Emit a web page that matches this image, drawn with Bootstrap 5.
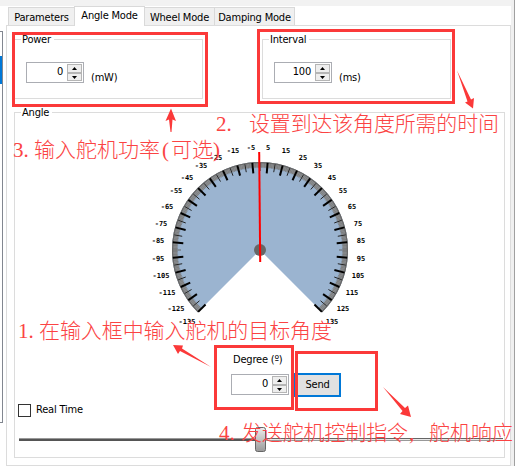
<!DOCTYPE html>
<html lang="zh">
<head>
<meta charset="utf-8">
<meta name="viewport" content="width=device-width, initial-scale=1">
<title>Servo control</title>
<link href="https://cdn.jsdelivr.net/npm/bootstrap@5.3.0/dist/css/bootstrap.min.css" rel="stylesheet">
<style>
body{font-family:"DejaVu Sans Condensed","DejaVu Sans",sans-serif;font-stretch:condensed;font-size:11px;line-height:14px;letter-spacing:-.2px;color:#000;background:#fff}
.window{width:515px;height:466px;background:#fff}
.topstrip{height:6px;background:#f2f2f2}
.workspace{height:460px}
.sidepane{width:3px;height:392px;margin-top:25px;border:1px solid #828790;border-left:0}
.sidepane div{height:28px;margin-top:24px;background:#0078d7}
.edge{width:4px;margin-top:-6px;border-right:1px solid #a0a0a0;background:#f0f0f0}
.modes{width:506px;margin-left:3px}
.modes .nav-tabs{height:20px;border:0;padding:0 0 0 2px;margin-bottom:-1px;position:relative}
.modes .nav-link{height:18px;padding:0;border:1px solid #d9d9d9;border-bottom:0;border-radius:0;background:#f0f0f0;color:#000;text-align:center;line-height:19px;margin:0 0 1px -1px}
.modes .nav-link.active{height:20px;background:#fff;color:#000;margin-bottom:0;border-color:#d9d9d9;line-height:18px}
.t1{width:67px}.t2{width:71px}.t3{width:71px}.t4{width:81px}
.page{height:441px;border:1px solid #dcdcdc;padding:13px 5px 0 7px}
.box{border:1px solid #dcdcdc}
.box>.caption{display:table;margin:-7px 0 0 6px;padding:0 3px 0 1px;background:#fff}
.small-box{width:189px;height:60px}
.groups{padding-right:54px}
.entry{padding:15px 0 0 11px}
.unit{padding-top:9px;margin-left:-1px}
.spin{width:58px;height:21px;border:1px solid #abadb3;padding:1px}
.spin .val{line-height:16px}
.spin .arrows{width:15px}
.spin .arrows i{height:9px;border:1px solid #b5b5b5;background:#eee}
.spin .arrows svg{display:block;margin:2px auto 0}
.angle{height:346px;margin-top:13px}
.dial{display:block;margin:19px 0 0 126px;width:240px;height:190px}
.dial text{font:bold 7px "DejaVu Sans Mono",monospace;letter-spacing:0;text-anchor:middle}
.degree{margin:24px 0 0 216px}
.degree-label{height:21px;padding-left:2px}
.send{width:47px;height:24px;margin:-1px 0 0 5px;border:2px solid #0078d7;border-radius:0;background:#e1e1e1;color:#000;font-size:11px;line-height:14px;letter-spacing:-.2px;padding:0}
.realtime{margin:6px 0 0 3px}
.realtime .form-check-input{width:13px;height:13px;margin:0;border:1px solid #333;border-radius:0}
.realtime span{margin-left:5px}
.slider{display:block;margin:10px 0 0 4px}
.notes{left:0;top:0;pointer-events:none}
.notes text{font-family:"Liberation Serif","Noto Sans CJK SC",serif;font-size:21px;font-weight:300;fill:#fb4343;letter-spacing:0}
</style>
</head>
<body>
<main class="window position-relative overflow-hidden">
<div class="topstrip"></div>
<div class="workspace d-flex">
  <aside class="sidepane"><div></div></aside>
  <section class="modes">
    <nav class="nav nav-tabs align-items-end flex-nowrap">
      <a class="nav-link t1 ms-0">Parameters</a><a class="nav-link t2 active">Angle Mode</a><a class="nav-link t3">Wheel Mode</a><a class="nav-link t4">Damping Mode</a>
    </nav>
    <div class="page">
      <div class="groups d-flex justify-content-between">
        <div class="box small-box"><span class="caption">Power</span>
          <div class="entry d-flex gap-2"><div class="spin d-flex justify-content-end gap-1"><span class="val">0</span><span class="arrows d-flex flex-column"><i><svg width="5" height="3"><path d="M0 3L2.5 0L5 3z"/></svg></i><i><svg width="5" height="3"><path d="M0 0L2.5 3L5 0z"/></svg></i></span></div><span class="unit">(mW)</span></div>
        </div>
        <div class="box small-box"><span class="caption">Interval</span>
          <div class="entry d-flex gap-2"><div class="spin d-flex justify-content-end gap-1"><span class="val">100</span><span class="arrows d-flex flex-column"><i><svg width="5" height="3"><path d="M0 3L2.5 0L5 3z"/></svg></i><i><svg width="5" height="3"><path d="M0 0L2.5 3L5 0z"/></svg></i></span></div><span class="unit">(ms)</span></div>
        </div>
      </div>
      <div class="box angle"><span class="caption">Angle</span>
        <svg class="dial" viewBox="141 139 240 190" id="dial">
          <path d="M260 250L197.8 312.2A88 88 0 1 1 322.2 312.2z" fill="#9bb4d0"/>
          <path d="M199.6 310.4A85.4 85.4 0 1 1 320.4 310.4" fill="none" stroke="#909396" stroke-width="5.2"/>
          <path d="M198.2 311.8A87.4 87.4 0 1 1 321.8 311.8" fill="none" stroke="#686868" stroke-width="1.2"/>
          <g id="ticks"></g>
          <circle cx="260" cy="250" r="6" fill="#666"/>
          <path d="M259.2 152L260.2 262" stroke="#f00" stroke-width="2"/>
        </svg>
        <div class="degree"><div class="degree-label">Degree (º)</div>
          <div class="d-flex"><div class="spin d-flex justify-content-end gap-1"><span class="val">0</span><span class="arrows d-flex flex-column"><i><svg width="5" height="3"><path d="M0 3L2.5 0L5 3z"/></svg></i><i><svg width="5" height="3"><path d="M0 0L2.5 3L5 0z"/></svg></i></span></div><button class="btn send">Send</button></div>
        </div>
        <label class="realtime d-flex align-items-center"><input type="checkbox" class="form-check-input"><span>Real Time</span></label>
        <svg class="slider" width="484" height="26">
          <defs><linearGradient id="thumb" x2="0" y2="1"><stop stop-color="#eee"/><stop offset="1" stop-color="#999"/></linearGradient></defs>
          <path d="M0 11.5H242" stroke="#999"/><path d="M0 13H242" stroke="#555" stroke-width="2"/>
          <path d="M242 11.5H484" stroke="#666"/><path d="M242 12.5H484" stroke="#e8e8e8"/><path d="M242 13.5H484" stroke="#999"/>
          <rect x="236.5" y=".5" width="10" height="24" rx="2" fill="url(#thumb)" stroke="#666"/>
        </svg>
      </div>
    </div>
  </section>
  <div class="edge"></div>
</div>
<svg class="notes position-absolute" width="515" height="466">
  <g fill="none" stroke="#fb3939" stroke-width="3">
    <rect x="13.5" y="33.5" width="193" height="72"/>
    <rect x="258.5" y="30.5" width="195" height="72"/>
    <rect x="215.5" y="346.5" width="77" height="62"/>
    <rect x="296.5" y="352.5" width="80" height="57"/>
  </g>
  <g fill="#fb3939">
    <path d="M171 108.5L176 121L172.5 119.5L171.5 132H170.5L169 119.5L165.5 121z"/>
    <path d="M457 70.5L471 99.5L474 98L473 108.5L465 102.5L467.5 101.5z"/>
    <path d="M173 345L183 345.5L182 348.5L211 367L180 351L178 354z"/>
    <path d="M383 387L405 408L408 405.5L411 417L400 414L402.5 411z"/>
  </g>
  <text x="216" y="131">2.</text><text x="249" y="131" textLength="250">设置到达该角度所需的时间</text>
  <text x="13" y="157">3.</text><text x="34" y="157" textLength="126">输入舵机功率</text><text x="162" y="157">(</text><text x="171" y="157" textLength="42">可选</text><text x="213" y="157">)</text>
  <text x="18" y="338">1.</text><text x="39" y="338" textLength="293">在输入框中输入舵机的目标角度</text>
  <text x="219" y="440">4.</text><text x="241" y="440" textLength="167">发送舵机控制指令</text><text x="409" y="440">,</text><text x="429" y="440" textLength="84">舵机响应</text>
</svg>
</main>
<script>
const g=document.getElementById('ticks');
const point=(a,r)=>{const t=a*Math.PI/180;return (260+r*Math.sin(t)).toFixed(2)+' '+(250-r*Math.cos(t)).toFixed(2)};
let out='';
for(let a=-135;a<=135;a++){
  const major=a%10!==0&&a%5===0,mid=a%10===0;
  out+=`<path d="M${point(a,major?87.5:87)}L${point(a,major?77:mid?79:82)}" stroke="${major?'#000':mid?(Math.abs(a)===90?'#666':'#222'):'#626262'}" stroke-width="${major?2:mid?1:.45}"/>`;
}
const half=[[8,147],[26,150],[43,157],[58,165],[72,177],[83,190],[92,206],[98,223],[101,240],[101,258],[98,275],[92,292],[83,308],[72,321]];
half.forEach(([x,y],i)=>{const n=5+i*10;out+=`<text x="${260+x}" y="${y+3}">${n}</text><text x="${259-x}" y="${y+3}">-${n}</text>`});
g.innerHTML=out;
</script>
<script src="https://cdn.jsdelivr.net/npm/bootstrap@5.3.0/dist/js/bootstrap.bundle.min.js"></script>
</body>
</html>
